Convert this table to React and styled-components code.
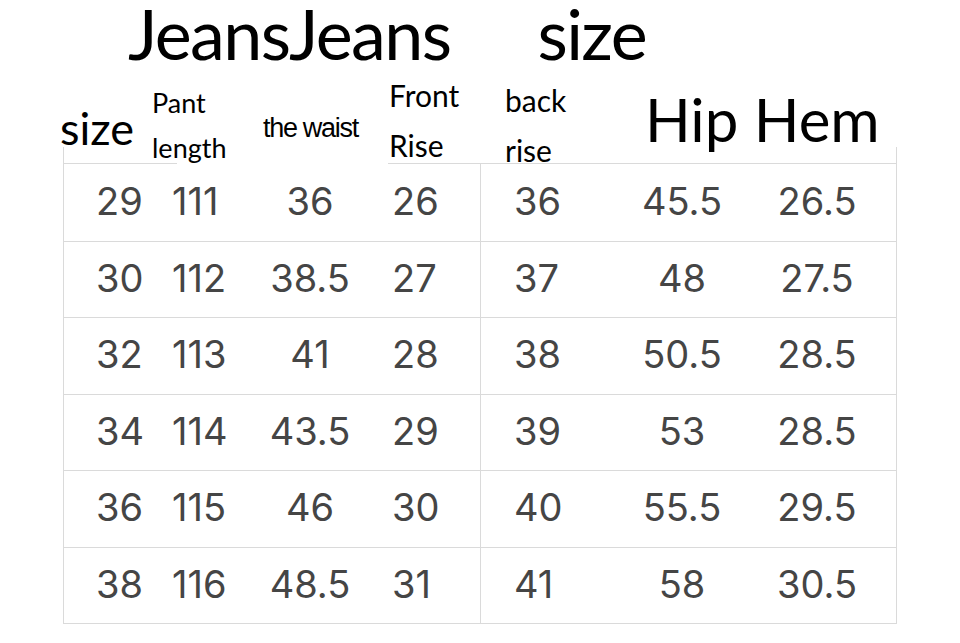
import React from 'react';
import styled, { createGlobalStyle } from 'styled-components';

const GlobalStyle = createGlobalStyle`
    html, body {
        margin: 0;
        padding: 0;
        background: #fff;
    }
`

const Page = styled.div`
    width: 960px;
    height: 643px;
    background: #fff;
    overflow: hidden;
    font-family: Lato, "Open Sans", sans-serif;
    color: #000;
`

const TitleRow = styled.header`
    display: flex;
    align-items: flex-start;
    gap: 87px;
    height: 70px;
    padding-left: 128px;
    font-size: 70px;
    line-height: 66px;
    letter-spacing: -1.6px;
`

// header labels sit above the table, the lower lines hang over its top strip
const HeaderRow = styled.div`
    display: grid;
    grid-template-columns: 92px 111px 126px 116px 140px 1fr;
    height: 77px;
    padding-left: 60px;
`

const Label = styled.div`
    font-family: ${p => p.$narrow ? '"Liberation Sans", Arial, sans-serif' : 'Lato, "Open Sans", sans-serif'};
    font-size: ${p => p.$size}px;
    line-height: ${p => p.$lh}px;
    padding-top: ${p => p.$top}px;
    letter-spacing: ${p => p.$narrow ? '-1.3px' : 'normal'};
    white-space: nowrap;
    height: 0;
`

const Table = styled.div`
    display: grid;
    grid-template-rows: 17px repeat(6, 1fr);
    width: 834px;
    height: 477px;
    margin-left: 63px;
    box-sizing: border-box;
    border: 1px solid #dadada;
    border-top: none;
    font-family: Inter, "Liberation Sans", sans-serif;
    font-size: 38px;
    color: #454545;
`

const TopStrip = styled.div`
    display: flex;
    align-items: flex-end;
`

const Rule = styled.div`
    width: ${p => p.$w}px;
    flex: ${p => p.$w ? 'none' : '1'};
    height: 1px;
    background: ${p => p.$hidden ? 'transparent' : '#dadada'};
`

const Row = styled.div`
    display: grid;
    grid-template-columns: 416px 1fr;
    border-top: ${p => p.$first ? 'none' : '1px solid #dadada'};
`

const Half = styled.div`
    display: flex;
    align-items: center;
    padding-left: ${p => p.$pad}px;
    border-left: ${p => p.$divider ? '1px solid #dadada' : 'none'};
`

const Cell = styled.span`
    width: ${p => p.$w}px;
    flex: none;
    text-align: ${p => p.$align};
    padding-left: ${p => p.$indent || 0}px;
    box-sizing: border-box;
    margin-top: -3px;
`

const leftCols = [
    { w: 76, align: 'left' },
    { w: 78, align: 'left' },
    { w: 120, align: 'center' },
    { w: 100, align: 'left', indent: 22 },
]

const rightCols = [
    { w: 100, align: 'left' },
    { w: 136, align: 'center' },
    { w: 134, align: 'center' },
]

const rows = [
    ['29', '111', '36', '26', '36', '45.5', '26.5'],
    ['30', '112', '38.5', '27', '37', '48', '27.5'],
    ['32', '113', '41', '28', '38', '50.5', '28.5'],
    ['34', '114', '43.5', '29', '39', '53', '28.5'],
    ['36', '115', '46', '30', '40', '55.5', '29.5'],
    ['38', '116', '48.5', '31', '41', '58', '30.5'],
]

function App() {
    return (
        <Page>
            <GlobalStyle />
            <TitleRow>
                <span>JeansJeans</span>
                <span>size</span>
            </TitleRow>
            <HeaderRow>
                <Label $size={45} $lh={46} $top={35}>size</Label>
                <Label $size={27} $lh={45} $top={10}>Pant<br />length</Label>
                <Label $narrow $size={27} $lh={28} $top={44}>the waist</Label>
                <Label $size={30} $lh={50} $top={0}>Front<br />Rise</Label>
                <Label $size={30} $lh={50} $top={5}>back<br />rise</Label>
                <Label $size={60} $lh={60} $top={19}>Hip Hem</Label>
            </HeaderRow>
            <Table>
                <TopStrip>
                    <Rule $w={113} />
                    <Rule $w={211} $hidden />
                    <Rule />
                </TopStrip>
                {rows.map((r, i) => (
                    <Row key={i} $first={i === 0}>
                        <Half $pad={32}>
                            {leftCols.map((c, j) => (
                                <Cell key={j} $w={c.w} $align={c.align} $indent={c.indent}>{r[j]}</Cell>
                            ))}
                        </Half>
                        <Half $pad={33} $divider>
                            {rightCols.map((c, j) => (
                                <Cell key={j} $w={c.w} $align={c.align}>{r[j + 4]}</Cell>
                            ))}
                        </Half>
                    </Row>
                ))}
            </Table>
        </Page>
    )
}

export default App;
